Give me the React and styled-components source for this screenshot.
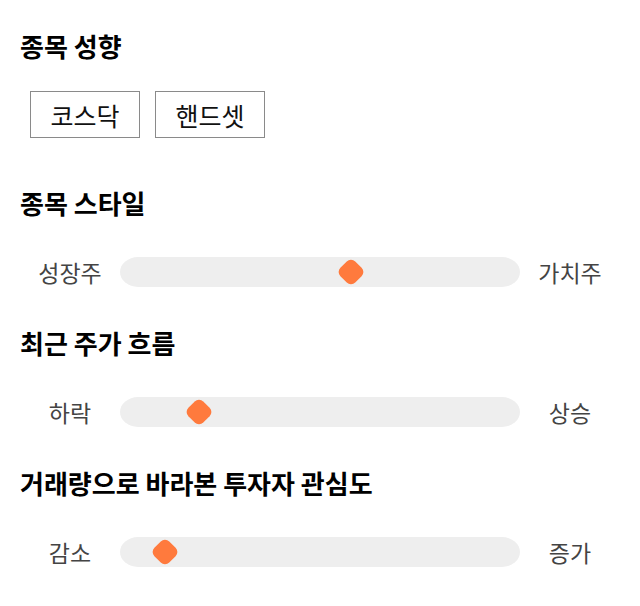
import React, { useState } from 'react';
import styled, { createGlobalStyle } from 'styled-components';

const GlobalStyle = createGlobalStyle`
  body {
    margin: 0;
    background: #ffffff;
    font-family: 'Noto Sans CJK KR', 'Noto Sans', sans-serif;
  }
`;

const Page = styled.div`
  display: flex;
  flex-direction: column;
  padding: 30px 20px 0 20px;
  width: 640px;
  box-sizing: border-box;
`;

const Section = styled.div`
  display: flex;
  flex-direction: column;
  margin-bottom: ${(props) => props.gap || 40}px;
`;

const Title = styled.h2`
  margin: 0;
  font-size: 26px;
  font-weight: 700;
  line-height: 32px;
  color: #000;
  margin-bottom: ${(props) => props.gap || 38}px;
`;

const ChipRow = styled.div`
  display: flex;
  flex-direction: row;
  gap: 15px;
  margin-left: 10px;
`;

const Chip = styled.button`
  width: 110px;
  height: 47px;
  box-sizing: border-box;
  border: 1px solid ${(props) => (props.active ? '#ff7a3d' : '#8a8a8a')};
  background: #fff;
  font-family: inherit;
  font-size: 25px;
  color: #111;
  padding: 0;
  cursor: pointer;
`;

const SliderRow = styled.div`
  display: grid;
  grid-template-columns: 100px 400px 100px;
  align-items: center;
  height: 30px;
`;

const SideLabel = styled.span`
  text-align: center;
  font-size: 23px;
  color: #444;
  line-height: 30px;
`;

const Track = styled.div`
  position: relative;
  height: 30px;
  background: #eeeeee;
  border-radius: 18px / 15px;
`;

const Thumb = styled.div`
  position: absolute;
  top: 50%;
  width: 21px;
  height: 21px;
  background: #ff7a3d;
  border-radius: 6px;
  transform: translate(-50%, -50%) rotate(45deg);
`;

const Slider = ({ left, right, value }) => (
  <SliderRow>
    <SideLabel>{left}</SideLabel>
    <Track>
      <Thumb style={{ left: `${value}%` }} />
    </Track>
    <SideLabel>{right}</SideLabel>
  </SliderRow>
);

export default function App() {
  const [market, setMarket] = useState(null);

  return (
    <Page>
      <GlobalStyle />

      <Section gap={49}>
        <Title gap={29}>종목 성향</Title>
        <ChipRow>
          <Chip active={market === 'kosdaq'} onClick={() => setMarket('kosdaq')}>코스닥</Chip>
          <Chip active={market === 'handset'} onClick={() => setMarket('handset')}>핸드셋</Chip>
        </ChipRow>
      </Section>

      <Section>
        <Title>종목 스타일</Title>
        <Slider left="성장주" right="가치주" value={57.75} />
      </Section>

      <Section>
        <Title>최근 주가 흐름</Title>
        <Slider left="하락" right="상승" value={19.75} />
      </Section>

      <Section>
        <Title>거래량으로 바라본 투자자 관심도</Title>
        <Slider left="감소" right="증가" value={11.25} />
      </Section>
    </Page>
  );
}
